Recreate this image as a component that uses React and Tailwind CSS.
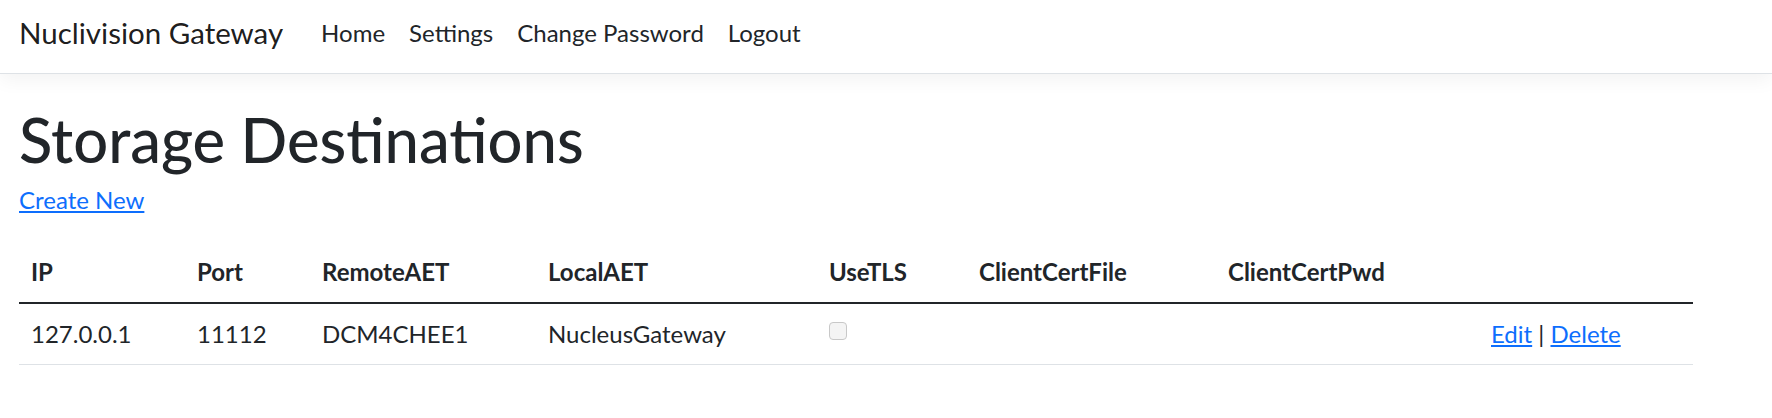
const font = { fontFamily: '"Segoe UI", Lato, "Noto Sans", sans-serif' };

const columns = [
  { key: "ip", label: "IP", width: "w-[166px]" },
  { key: "port", label: "Port", width: "w-[125px]" },
  { key: "remote", label: "RemoteAET", width: "w-[226px]" },
  { key: "local", label: "LocalAET", width: "w-[281px]" },
  { key: "tls", label: "UseTLS", width: "w-[150px]" },
  { key: "file", label: "ClientCertFile", width: "w-[249px]" },
  { key: "pwd", label: "ClientCertPwd", width: "w-[263px]" },
  { key: "actions", label: "", width: "w-[214px]" },
];

const rows = [
  { ip: "127.0.0.1", port: "11112", remote: "DCM4CHEE1", local: "NucleusGateway", tls: false, file: "", pwd: "" },
];

function NavBar() {
  return (
    <header className="relative">
      <nav className="flex h-[74px] items-center border-b border-[#dee2e6] bg-white px-[19px] pb-[8px] shadow-[0_6px_18px_rgba(0,0,0,0.05)]">
        <a href="#" className="mr-[26px] text-[29.5px] leading-none text-[rgba(0,0,0,0.9)]">
          Nuclivision Gateway
        </a>
        <ul className="flex items-center text-[24px] text-[#212529]">
          {["Home", "Settings", "Change Password", "Logout"].map((item) => (
            <li key={item}>
              <a href="#" className="block px-[12px] py-[12px] leading-[36px]">
                {item}
              </a>
            </li>
          ))}
        </ul>
      </nav>
    </header>
  );
}

export default function App() {
  return (
    <div className="min-h-[418px] bg-white text-[24px] leading-[36px] text-[#212529]" style={font}>
      <NavBar />
      <main className="px-[19px] pt-[24px]">
        <h1 className="mb-[7px] pt-[5px] text-[61.5px] font-medium leading-[72px]">Storage Destinations</h1>
        <p className="mb-[24px]">
          <a href="#" className="text-[#0d6efd] underline">
            Create New
          </a>
        </p>
        <table className="w-[1674px] table-fixed border-collapse">
          <thead>
            <tr className="border-b-2 border-[#212529]">
              {columns.map((col) => (
                <th key={col.key} className={`${col.width} px-[12px] py-[12px] text-left font-bold`}>
                  {col.label}
                </th>
              ))}
            </tr>
          </thead>
          <tbody>
            {rows.map((row) => (
              <tr key={row.ip} className="border-b border-[#dee2e6]">
                <td className="px-[12px] py-[12px]">{row.ip}</td>
                <td className="px-[12px] py-[12px]">{row.port}</td>
                <td className="px-[12px] py-[12px]">{row.remote}</td>
                <td className="px-[12px] py-[12px]">{row.local}</td>
                <td className="px-[12px] py-[12px]">
                  <span className="block h-[18px] w-[18px] rounded-[4px] border border-[#c8c8c8] bg-[#f4f4f4] -translate-y-[3px]" />
                </td>
                <td className="px-[12px] py-[12px]">{row.file}</td>
                <td className="px-[12px] py-[12px]">{row.pwd}</td>
                <td className="px-[12px] py-[12px]">
                  <a href="#" className="text-[#0d6efd] underline">Edit</a> |{" "}
                  <a href="#" className="text-[#0d6efd] underline">Delete</a>
                </td>
              </tr>
            ))}
          </tbody>
        </table>
      </main>
    </div>
  );
}
